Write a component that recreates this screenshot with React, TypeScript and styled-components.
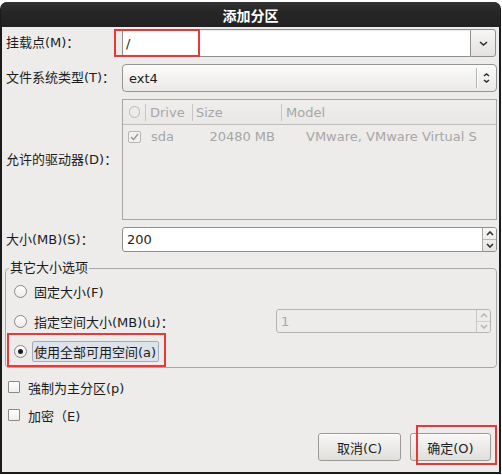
import React from "react";
import styled, { createGlobalStyle } from "styled-components";

const Global = createGlobalStyle`
  html, body { margin: 0; padding: 0; background: #ffffff; }
  body {
    font-family: "DejaVu Sans", "Noto Sans CJK SC", sans-serif;
    font-size: 13px;
    color: #1c1c1c;
  }
  * { box-sizing: border-box; }
`;

const ANNOT = "#ef3636";

const Screen = styled.div`
  width: 502px;
  height: 475px;
  padding-top: 2px;
  overflow: hidden;
`;

const Window = styled.div`
  width: 501px;
  height: 472px;
  display: flex;
  flex-direction: column;
  background: #1b1b1b;
  border-radius: 7px 7px 0 0;
  padding: 0 2px 2px 2px;
  overflow: hidden;
`;

const TitleBar = styled.div`
  height: 25px;
  flex: none;
  display: flex;
  align-items: center;
  justify-content: center;
  background: linear-gradient(#333333, #262626 40%, #222222);
  color: #ffffff;
  font-weight: bold;
  font-size: 14px;
  border-radius: 6px 6px 0 0;
  margin: 0 -1px;
`;

const Content = styled.div`
  flex: 1;
  display: flex;
  flex-direction: column;
  background: #edeceb;
  padding: 2px 2px 11px 0;
`;

const Form = styled.div`
  display: grid;
  grid-template-columns: 116px 1fr;
  row-gap: 7px;
  padding-left: 4px;
  align-items: center;
`;

const Label = styled.div`
  white-space: nowrap;
  line-height: 16px;
`;

const Annotated = styled.div`
  position: relative;
`;

const RedBox = styled.div<{ $l: number; $t: number; $w: number; $h: number }>`
  position: absolute;
  left: ${(p) => p.$l}px;
  top: ${(p) => p.$t}px;
  width: ${(p) => p.$w}px;
  height: ${(p) => p.$h}px;
  border: 2.5px solid ${ANNOT};
  pointer-events: none;
  z-index: 5;
`;

/* ---- combo with entry ---- */
const EntryCombo = styled.div`
  display: flex;
  height: 28px;
  margin-right: 1px;
`;

const EntryField = styled.div`
  flex: 1;
  display: flex;
  align-items: center;
  background: #ffffff;
  border: 1px solid #8f8f8f;
  border-right: none;
  border-radius: 3px 0 0 3px;
  padding-left: 3px;
  box-shadow: inset 0 1px 1px rgba(0, 0, 0, 0.08);
`;

const ComboButton = styled.div`
  width: 26px;
  display: flex;
  align-items: center;
  justify-content: center;
  background: linear-gradient(#f7f6f5, #e4e2df);
  border: 1px solid #8f8f8f;
  border-radius: 0 3px 3px 0;
`;

/* ---- plain combo ---- */
const Combo = styled.div`
  height: 28px;
  display: flex;
  align-items: center;
  background: linear-gradient(#fbfbfa, #ebe9e7);
  border: 1px solid #959595;
  border-radius: 4px;
  padding-left: 6px;
`;

const ComboValue = styled.div`
  flex: 1;
`;

const VSep = styled.div`
  width: 1px;
  height: 20px;
  background: #b4b4b4;
  box-shadow: 1px 0 0 #ffffff;
`;

const ArrowBox = styled.div`
  width: 19px;
  display: flex;
  flex-direction: column;
  align-items: center;
  justify-content: center;
  gap: 2px;
`;

/* ---- tree ---- */
const Tree = styled.div`
  height: 121px;
  border: 1px solid #a6a6a6;
  color: #a6a6a6;
`;

const TreeHeader = styled.div`
  display: grid;
  grid-template-columns: 22px 47px 89px 1fr;
  height: 25px;
  border-bottom: 1px solid #bdbcbb;
  align-items: center;
  background: linear-gradient(#efeeed, #e9e8e7);
`;

const HeadCell = styled.div<{ $sep?: boolean; $pl: number }>`
  position: relative;
  height: 100%;
  display: flex;
  align-items: center;
  padding-left: ${(p) => p.$pl}px;
  ${(p) =>
    p.$sep &&
    `&::before { content: ""; position: absolute; left: 0; top: 4px; bottom: 3px; width: 1px; background: #c6c5c4; }`}
`;

const HeadToggle = styled.span`
  width: 11px;
  height: 12px;
  border: 1px solid #b9b9b9;
  border-radius: 6px;
`;

const TreeRow = styled.div`
  display: grid;
  grid-template-columns: 22px 47px 89px 1fr;
  height: 23px;
  align-items: center;
  white-space: nowrap;
  overflow: hidden;
`;

const Cell = styled.div<{ $pl?: number; $pr?: number; $right?: boolean }>`
  padding-left: ${(p) => p.$pl ?? 0}px;
  padding-right: ${(p) => p.$pr ?? 0}px;
  display: flex;
  justify-content: ${(p) => (p.$right ? "flex-end" : "flex-start")};
  overflow: hidden;
`;

const TreeCheck = styled.span`
  width: 13px;
  height: 12px;
  border: 1px solid #b5b5b5;
  border-radius: 2px;
  display: flex;
  align-items: center;
  justify-content: center;
  background: #f2f1f0;
`;

/* ---- spin ---- */
const Spin = styled.div<{ $disabled?: boolean; $w?: number; $h: number }>`
  display: flex;
  height: ${(p) => p.$h}px;
  width: ${(p) => (p.$w ? `${p.$w}px` : "auto")};
  background: ${(p) => (p.$disabled ? "#edeceb" : "#ffffff")};
  border: 1px solid ${(p) => (p.$disabled ? "#b5b4b3" : "#8f8f8f")};
  border-radius: 3px;
  color: ${(p) => (p.$disabled ? "#a8a8a8" : "#1c1c1c")};
`;

const SpinText = styled.div`
  flex: 1;
  display: flex;
  align-items: center;
  padding-left: 4px;
`;

const SpinButtons = styled.div<{ $disabled?: boolean }>`
  width: 14px;
  display: flex;
  flex-direction: column;
  border-left: 1px solid ${(p) => (p.$disabled ? "#c8c7c6" : "#a9a9a9")};
  background: ${(p) => (p.$disabled ? "#edeceb" : "linear-gradient(#f8f7f6, #e6e4e2)")};
  border-radius: 0 2px 2px 0;
`;

const SpinHalf = styled.div<{ $top?: boolean; $disabled?: boolean }>`
  flex: 1;
  display: flex;
  align-items: center;
  justify-content: center;
  ${(p) => (p.$top ? `border-bottom: 1px solid ${p.$disabled ? "#d0cfce" : "#b8b8b8"};` : "")}
`;

/* ---- frame ---- */
const Frame = styled.fieldset`
  margin: 8px 0 0 3px;
  border: 1px solid #aaa9a8;
  border-radius: 4px;
  padding: 0 5px 1px 8px;
  min-width: 0;
`;

const Legend = styled.legend`
  padding: 0 1px;
  margin-left: -5px;
  line-height: 16px;
  font-size: 13px;
`;

const OptionRow = styled.div`
  position: relative;
  height: 30px;
  display: flex;
  align-items: center;
  gap: 7px;
`;

const Radio = styled.span<{ $on?: boolean }>`
  width: 13px;
  height: 13px;
  border-radius: 50%;
  border: 1px solid #878787;
  background: linear-gradient(#ffffff, #ecebea);
  display: flex;
  align-items: center;
  justify-content: center;
  flex: none;
  &::after {
    content: "";
    width: 5px;
    height: 5px;
    border-radius: 50%;
    background: ${(p) => (p.$on ? "#1f1f1f" : "transparent")};
  }
`;

const FocusLabel = styled.span`
  height: 21px;
  display: flex;
  align-items: center;
  padding: 0 2px 0 1px;
  margin-left: -2px;
  background: #dde3ea;
  border: 1px solid #a2acb9;
  border-radius: 2px;
`;

const Spacer = styled.div`
  flex: 1;
`;

/* ---- checks ---- */
const CheckList = styled.div`
  margin-top: 5px;
  padding-left: 6px;
  display: flex;
  flex-direction: column;
`;

const CheckRow = styled.div`
  height: 28px;
  display: flex;
  align-items: center;
  gap: 8px;
`;

const CheckBox = styled.span`
  width: 12px;
  height: 12px;
  border: 1px solid #898989;
  border-radius: 1px;
  background: linear-gradient(#ffffff, #efeeed);
`;

/* ---- buttons ---- */
const ButtonRow = styled.div`
  margin-top: auto;
  display: flex;
  justify-content: flex-end;
  gap: 9px;
  padding-right: 6px;
`;

const Button = styled.div<{ $w: number }>`
  height: 28px;
  width: ${(p) => p.$w}px;
  display: flex;
  align-items: center;
  justify-content: center;
  background: linear-gradient(#f8f7f6, #e1dfdc);
  border: 1px solid #9a9a9a;
  border-radius: 3px;
  box-shadow: inset 0 1px 0 #ffffff;
`;

const Chevron = ({ up, color = "#2f2f2f", w = 9, h = 5 }: { up?: boolean; color?: string; w?: number; h?: number }) => (
  <svg width={w} height={h} viewBox={`0 0 ${w} ${h}`}>
    <polyline
      points={up ? `1,${h - 1} ${w / 2},1 ${w - 1},${h - 1}` : `1,1 ${w / 2},${h - 1} ${w - 1},1`}
      fill="none"
      stroke={color}
      strokeWidth={1.6}
    />
  </svg>
);

const CheckMark = () => (
  <svg width="9" height="8" viewBox="0 0 9 8">
    <polyline points="1,4 3.5,6.5 8,1" fill="none" stroke="#9e9e9e" strokeWidth={1.6} />
  </svg>
);

export default function App() {
  return (
    <>
      <Global />
      <Screen>
        <Window>
          <TitleBar>添加分区</TitleBar>
          <Content>
            <Form>
              <Label>挂载点(M)：</Label>
              <Annotated>
                <EntryCombo>
                  <EntryField>/</EntryField>
                  <ComboButton>
                    <Chevron />
                  </ComboButton>
                </EntryCombo>
                <RedBox $l={-8} $t={0} $w={86} $h={28} />
              </Annotated>

              <Label>文件系统类型(T)：</Label>
              <Combo>
                <ComboValue>ext4</ComboValue>
                <VSep />
                <ArrowBox>
                  <Chevron up w={7} h={4} />
                  <Chevron w={7} h={4} />
                </ArrowBox>
              </Combo>

              <Label>允许的驱动器(D)：</Label>
              <Tree>
                <TreeHeader>
                  <HeadCell $pl={6}>
                    <HeadToggle />
                  </HeadCell>
                  <HeadCell $sep $pl={5}>Drive</HeadCell>
                  <HeadCell $sep $pl={4}>Size</HeadCell>
                  <HeadCell $sep $pl={5}>Model</HeadCell>
                </TreeHeader>
                <TreeRow>
                  <Cell $pl={5}>
                    <TreeCheck>
                      <CheckMark />
                    </TreeCheck>
                  </Cell>
                  <Cell $pl={6}>sda</Cell>
                  <Cell $right $pr={6}>20480 MB</Cell>
                  <Cell $pl={25}>VMware, VMware Virtual S</Cell>
                </TreeRow>
              </Tree>

              <Label>大小(MB)(S)：</Label>
              <Spin $h={25}>
                <SpinText>200</SpinText>
                <SpinButtons>
                  <SpinHalf $top>
                    <Chevron up w={8} h={5} />
                  </SpinHalf>
                  <SpinHalf>
                    <Chevron w={8} h={5} />
                  </SpinHalf>
                </SpinButtons>
              </Spin>
            </Form>

            <Frame>
              <Legend>其它大小选项</Legend>
              <OptionRow>
                <Radio />
                <span>固定大小(F)</span>
              </OptionRow>
              <OptionRow>
                <Radio />
                <span>指定空间大小(MB)(u)：</span>
                <Spacer />
                <Spin $disabled $w={215} $h={24}>
                  <SpinText>1</SpinText>
                  <SpinButtons $disabled>
                    <SpinHalf $top $disabled>
                      <Chevron up w={8} h={5} color="#b8b8b8" />
                    </SpinHalf>
                    <SpinHalf $disabled>
                      <Chevron w={8} h={5} color="#b8b8b8" />
                    </SpinHalf>
                  </SpinButtons>
                </Spin>
              </OptionRow>
              <OptionRow>
                <Radio $on />
                <FocusLabel>使用全部可用空间(a)</FocusLabel>
                <RedBox $l={-7} $t={-3} $w={159} $h={34} />
              </OptionRow>
            </Frame>

            <CheckList>
              <CheckRow>
                <CheckBox />
                <span>強制为主分区(p)</span>
              </CheckRow>
              <CheckRow>
                <CheckBox />
                <span>加密（E)</span>
              </CheckRow>
            </CheckList>

            <ButtonRow>
              <Button $w={83}>取消(C)</Button>
              <Annotated>
                <Button $w={81}>确定(O)</Button>
                <RedBox $l={6} $t={-8} $w={81} $h={40} />
              </Annotated>
            </ButtonRow>
          </Content>
        </Window>
      </Screen>
    </>
  );
}
